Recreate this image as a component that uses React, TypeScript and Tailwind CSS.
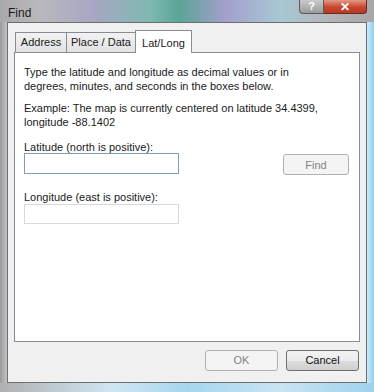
import React from "react";

const font = { fontFamily: '"Liberation Sans", Arial, sans-serif' };

function Btn({ label, disabled, className }: { label: string; disabled?: boolean; className?: string }) {
  return (
    <div
      className={
        "flex items-center justify-center rounded-[3px] border text-[11px] " +
        (disabled
          ? "border-[#adb2b5] bg-[#f4f4f4] text-[#838383] "
          : "border-[#707070] bg-[linear-gradient(#f2f2f2_0%,#ebebeb_50%,#dddddd_51%,#cfcfcf_100%)] text-[#111] ") +
        (className ?? "")
      }
    >
      {label}
    </div>
  );
}

export default function App() {
  return (
    <div
      className="w-[374px] h-[392px] overflow-hidden flex flex-col bg-[linear-gradient(90deg,#a9a9ab_0%,#b9b9bc_10%,#a8a6c4_25%,#7fb9b0_40%,#5aa595_48%,#a39fcb_60%,#a7c8d4_75%,#b4b4b8_88%,#a7a7aa_100%)]"
      style={font}
    >
      {/* title bar */}
      <div className="h-[22px] flex items-start justify-between shrink-0">
        <div className="pl-[8px] pt-[4px] text-[12px] text-[#1a1a1a]">Find</div>
        <div className="flex mr-[7px]">
          <div className="w-[25px] h-[14px] rounded-bl-[4px] border border-t-0 border-[#5a5a5a] bg-[linear-gradient(#c9c9c9,#9c9c9c)] flex items-center justify-center text-[11px] font-bold text-white leading-none">
            ?
          </div>
          <div className="w-[43px] h-[14px] rounded-br-[4px] border border-t-0 border-l-0 border-[#6a2a20] bg-[linear-gradient(#e39a86,#c8462f_55%,#b73a22)] flex items-center justify-center text-[12px] font-bold text-white leading-none">
            ✕
          </div>
        </div>
      </div>
      {/* body */}
      <div className="flex h-[361px] shrink-0">
        <div className="w-[7px] bg-[linear-gradient(90deg,#9a9a9c,#c4c4c6)]" />
        <div className="w-[360px] h-[361px] bg-[#f0f0f0] border border-[#6e6e6e] flex flex-col">
          {/* tabs */}
          <div className="flex items-end h-[29px] pl-[7px]">
            <div className="h-[20px] w-[52px] flex items-center justify-center border border-b-0 border-[#898c95] bg-[linear-gradient(#f2f2f2,#e2e2e2)] text-[11px] text-[#1a1a1a]">
              Address
            </div>
            <div className="h-[20px] w-[69px] flex items-center justify-center border border-b-0 border-l-0 border-[#898c95] bg-[linear-gradient(#f2f2f2,#e2e2e2)] text-[11px] text-[#1a1a1a]">
              Place / Data
            </div>
            <div className="h-[23px] w-[57px] -ml-[1px] -mb-[1px] relative z-10 flex justify-center items-start pt-[4px] border border-b-0 border-[#898c95] bg-white text-[11px] text-[#1a1a1a]">
              Lat/Long
            </div>
          </div>
          {/* panel */}
          <div className="mx-[6px] h-[290px] bg-white border border-[#898c95] px-[9px] pt-[12px] text-[11px] leading-[14px] text-[#1a1a1a]">
            <div>
              Type the latitude and longitude as decimal values or in
              <br />
              degrees, minutes, and seconds in the boxes below.
            </div>
            <div className="mt-[8px]">
              Example: The map is currently centered on latitude 34.4399,
              <br />
              longitude -88.1402
            </div>
            <div className="mt-[11px]">Latitude (north is positive):</div>
            <div className="flex items-start justify-between mt-[0px]">
              <div className="mt-[-1px] w-[155px] h-[21px] border border-[#7f9db9] bg-white" />
              <Btn label="Find" disabled className="w-[66px] h-[21px] mr-[1px]" />
            </div>
            <div className="mt-[15px]">Longitude (east is positive):</div>
            <div className="mt-[0px] w-[155px] h-[20px] border border-[#d9d9d9] bg-white" />
          </div>
          {/* bottom buttons */}
          <div className="flex justify-end gap-[8px] pr-[7px] pt-[8px]">
            <Btn label="OK" disabled className="w-[73px] h-[21px]" />
            <Btn label="Cancel" className="w-[73px] h-[21px]" />
          </div>
        </div>
        <div className="flex-1 bg-[linear-gradient(90deg,#cfe9f6,#8fd0ef)]" />
      </div>
      <div className="flex-1 bg-[linear-gradient(90deg,#b0b0b2,#cfe6f2_30%,#a6d6ee_50%,#c8e4f2_75%,#9fd2ee)]" />
    </div>
  );
}
